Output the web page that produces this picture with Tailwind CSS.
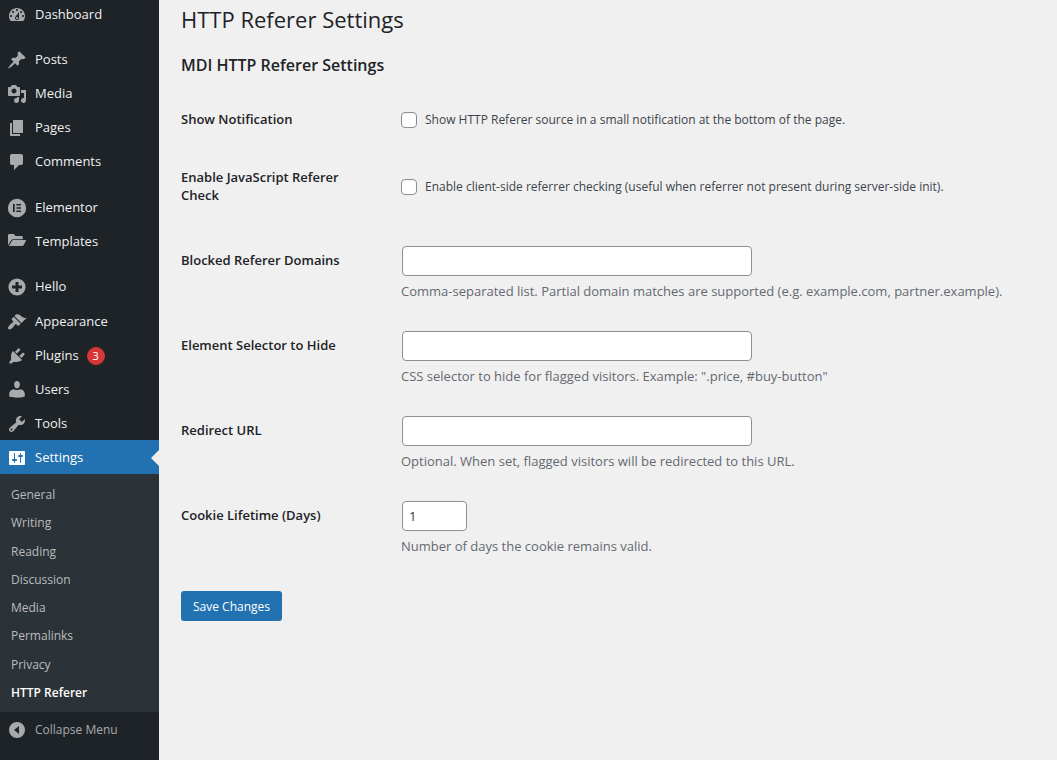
<!DOCTYPE html>
<html lang="en">
<head>
<meta charset="utf-8">
<meta name="viewport" content="width=device-width, initial-scale=1">
<title>HTTP Referer Settings</title>
<script src="https://cdn.jsdelivr.net/npm/@tailwindcss/browser@4"></script>
</head>
<body class="flex min-h-screen bg-[#f0f0f0] font-['Open_Sans','Noto_Sans',sans-serif] text-[13px] text-[#1d2327]">

<nav aria-label="Main menu" class="w-[159px] shrink-0 bg-[#1d2327] text-[#f0f0f1]">
  <ul>
    <li><a href="#" class="flex h-[30px] items-center gap-2 pl-[7px]">
      <svg class="size-5 fill-[#a7aaad]" viewBox="0 0 20 20"><path d="M3.76 16h12.48c1.1-1.37 1.76-3.11 1.76-5 0-4.42-3.58-8-8-8s-8 3.58-8 8c0 1.89.66 3.63 1.76 5zM10 4c.55 0 1 .45 1 1s-.45 1-1 1-1-.45-1-1 .45-1 1-1zM6 6c.55 0 1 .45 1 1s-.45 1-1 1-1-.45-1-1 .45-1 1-1zm8 0c.55 0 1 .45 1 1s-.45 1-1 1-1-.45-1-1 .45-1 1-1zm-5.37 5.55L12 7v6c0 1.1-.9 2-2 2s-2-.9-2-2c0-.57.24-1.08.63-1.45zM4 10c.55 0 1 .45 1 1s-.45 1-1 1-1-.45-1-1 .45-1 1-1zm12 0c.55 0 1 .45 1 1s-.45 1-1 1-1-.45-1-1 .45-1 1-1zm-5 3c0-.55-.45-1-1-1s-1 .45-1 1 .45 1 1 1 1-.45 1-1z"/></svg>Dashboard</a></li>
  </ul>
  <ul class="mt-3">
    <li><a href="#" class="flex h-[34px] items-center gap-2 pt-0.5 pl-[7px]">
      <svg class="size-5 fill-[#a7aaad]" viewBox="0 0 20 20"><path d="M10.44 3.02l1.82-1.82 6.36 6.35-1.83 1.82c-1.05-.68-2.48-.57-3.41.36l-.75.75c-.92.93-1.04 2.35-.35 3.41l-1.83 1.82-2.41-2.41-2.8 2.79c-.42.42-3.38 2.71-3.8 2.29s1.86-3.39 2.28-3.81l2.79-2.79L4.1 9.36l1.83-1.82c1.05.69 2.48.57 3.4-.36l.75-.75c.93-.92 1.05-2.35.36-3.41z"/></svg>Posts</a></li>
    <li><a href="#" class="flex h-[34px] items-center gap-2 pt-0.5 pl-[7px]">
      <svg class="size-5 fill-[#a7aaad]" viewBox="0 0 20 20"><path d="M13 11V4c0-.55-.45-1-1-1h-1.67L9 1H5L3.67 3H2c-.55 0-1 .45-1 1v7c0 .55.45 1 1 1h10c.55 0 1-.45 1-1zM7 4.5c1.38 0 2.5 1.12 2.5 2.5S8.38 9.5 7 9.5 4.5 8.38 4.5 7 5.62 4.5 7 4.5zM14 6h5v10.5c0 1.38-1.12 2.5-2.5 2.5S14 17.88 14 16.5s1.12-2.5 2.5-2.5c.17 0 .34.02.5.05V9h-3V6zm-4 8.05V13h2v3.5c0 1.38-1.12 2.5-2.5 2.5S7 17.88 7 16.5 8.12 14 9.5 14c.17 0 .34.02.5.05z"/></svg>Media</a></li>
    <li><a href="#" class="flex h-[34px] items-center gap-2 pt-0.5 pl-[7px]">
      <svg class="size-5 fill-[#a7aaad]" viewBox="0 0 20 20"><path d="M6 15V2h10v13H6zm-1 1h8v2H3V5h2v11z"/></svg>Pages</a></li>
    <li><a href="#" class="flex h-[34px] items-center gap-2 pt-0.5 pl-[7px]">
      <svg class="size-5 fill-[#a7aaad]" viewBox="0 0 20 20"><path d="M5 2h9c1.1 0 2 .9 2 2v7c0 1.1-.9 2-2 2h-2l-5 5v-5H5c-1.1 0-2-.9-2-2V4c0-1.1.9-2 2-2z"/></svg>Comments</a></li>
  </ul>
  <ul class="mt-3">
    <li><a href="#" class="flex h-[34px] items-center gap-2 pt-0.5 pl-[7px]">
      <svg class="size-5 fill-[#a7aaad]" viewBox="0 0 20 20"><path fill-rule="evenodd" d="M10 .8a9.200 9.200 0 1 0 0 18.400A9.200 9.200 0 0 0 10 .8zM6 6h1.700v8H6V6zm3.400 0H14v1.600H9.400V6zm0 3.200H14v1.600H9.400V9.200zm0 3.200H14V14H9.400v-1.600z"/></svg>Elementor</a></li>
    <li><a href="#" class="flex h-[34px] items-center gap-2 pt-0.5 pl-[7px]">
      <svg class="size-5 fill-[#a7aaad]" viewBox="0 0 20 20"><path d="M1 3.500C1 2.700 1.600 2 2.400 2h4.200L8.600 4h5.800c.8 0 1.400.6 1.400 1.400v1.800H6.400c-1 0-1.800.5-2.300 1.300L1 13.200V3.500zM6.400 8h11.800c.6 0 1 .6.700 1.100l-2.400 4.200c-.2.400-.6.700-1.100.7H1.900l3.300-5.400c.3-.4.700-.6 1.200-.6z"/></svg>Templates</a></li>
  </ul>
  <ul class="mt-3">
    <li><a href="#" class="flex h-[34px] items-center gap-2 pl-[7px]">
      <svg class="size-5 fill-[#a7aaad]" viewBox="0 0 20 20"><path fill-rule="evenodd" d="M10 1.400a8.600 8.600 0 1 0 0 17.200 8.600 8.600 0 0 0 0-17.200zM8.500 5h3v3.500H15v3h-3.500V15h-3v-3.500H5v-3h3.500V5z"/></svg>Hello</a></li>
    <li><a href="#" class="flex h-[34px] items-center gap-2 pt-0.5 pl-[7px]">
      <svg class="size-5 fill-[#a7aaad]" viewBox="0 0 20 20"><path d="M14.48 11.06L7.41 3.99l1.5-1.5c.5-.56 2.3-.47 3.51.32 1.21.8 1.43 1.28 2.91 2.1 1.18.64 2.45 1.26 4.45.85zm-.71.71L6.7 4.7 4.93 6.47c-.39.39-.39 1.02 0 1.41l1.06 1.06c.39.39.39 1.03 0 1.42-.6.6-1.43 1.11-2.21 1.69-.35.26-.7.53-1.01.84C1.43 14.23.4 16.08 1.4 17.07c.99 1 2.84-.03 4.18-1.36.31-.31.58-.66.85-1.02.57-.78 1.08-1.61 1.69-2.21.39-.39 1.02-.39 1.41 0l1.06 1.06c.39.39 1.02.39 1.41 0z"/></svg>Appearance</a></li>
    <li><a href="#" class="flex h-[34px] items-center gap-2 pt-0.5 pl-[7px]">
      <svg class="size-5 fill-[#a7aaad]" viewBox="0 0 20 20"><path d="M13.11 4.36L9.87 7.6 8 5.73l3.24-3.24c.35-.34 1.05-.2 1.56.32.52.51.66 1.21.31 1.55zm-8 1.77l.91-1.12 9.01 9.01-1.19.84c-.71.71-2.63 1.16-3.82 1.16H6.14L4.9 17.26c-.59.59-1.54.59-2.12 0-.59-.58-.59-1.53 0-2.12l1.24-1.24v-3.88c0-1.13.4-3.19 1.09-3.89zm7.26 3.97l3.24-3.24c.34-.35 1.04-.21 1.55.31.52.51.66 1.21.31 1.55l-3.24 3.25z"/></svg>Plugins<span class="flex size-[18px] items-center justify-center rounded-full bg-[#d63638] text-[11px] text-white">3</span></a></li>
    <li><a href="#" class="flex h-[34px] items-center gap-2 pt-0.5 pl-[7px]">
      <svg class="size-5 fill-[#a7aaad]" viewBox="0 0 20 20"><path d="M10 8.400c-2.100 0-2.900-2-2.900-3.800C7.100 2.400 8.200 1 10 1s2.900 1.400 2.900 3.600c0 1.800-.8 3.800-2.900 3.800zM6.600 9.300c.9.500 2.100.8 3.400.8s2.500-.3 3.400-.8c2.500.3 4.400 2.300 4.400 4.700v2.600c-2 .8-4.900 1.200-7.800 1.200s-5.800-.4-7.800-1.200V14c0-2.400 1.900-4.400 4.400-4.700z"/></svg>Users</a></li>
    <li><a href="#" class="flex h-[34px] items-center gap-2 pt-0.5 pl-[7px]">
      <svg class="size-5 fill-[#a7aaad]" viewBox="0 0 20 20"><path d="M16.68 9.77c-1.34 1.34-3.3 1.67-4.95.99l-5.41 6.52c-.99.99-2.59.99-3.58 0s-.99-2.59 0-3.57l6.52-5.42c-.68-1.65-.35-3.61.99-4.95 1.28-1.28 3.12-1.62 4.72-1.06l-2.89 2.89 2.82 2.82 2.86-2.87c.53 1.58.18 3.39-1.08 4.65zM3.81 16.21c.4.39 1.04.39 1.43 0 .4-.4.4-1.04 0-1.43-.39-.4-1.03-.4-1.43 0-.39.39-.39 1.03 0 1.43z"/></svg>Tools</a></li>
    <li>
      <a href="#" aria-current="true" class="flex h-[34px] items-center gap-2 bg-[#2271b1] pt-0.5 pl-[7px] text-white">
        <svg class="size-5 fill-white" viewBox="0 0 20 20"><path d="M18 16V4c0-.55-.45-1-1-1H3c-.55 0-1 .45-1 1v12c0 .55.45 1 1 1h14c.55 0 1-.45 1-1zM8 11h1c.55 0 1 .45 1 1s-.45 1-1 1H8v1.500c0 .28-.22.5-.5.5s-.5-.22-.5-.5V13H6c-.55 0-1-.45-1-1s.45-1 1-1h1V5.500c0-.28.22-.5.5-.5s.5.22.5.5V11zm5-2h-1c-.55 0-1-.45-1-1s.45-1 1-1h1V5.500c0-.28.22-.5.5-.5s.5.22.5.5V7h1c.55 0 1 .45 1 1s-.45 1-1 1h-1v5.500c0 .28-.22.5-.5.5s-.5-.22-.5-.5V9z"/></svg>Settings
        <svg class="ml-auto h-4 w-2 fill-[#f0f0f0]" viewBox="0 0 8 16"><path d="M8 0v16L0 8z"/></svg>
      </a>
      <ul class="flex min-h-[238px] flex-col bg-[#2c3338] pt-[7px] pb-[5px] text-xs text-[#babcbe]">
        <li class="flex flex-1 items-center"><a href="#" class="pl-[11px]">General</a></li>
        <li class="flex flex-1 items-center"><a href="#" class="pl-[11px]">Writing</a></li>
        <li class="flex flex-1 items-center"><a href="#" class="pl-[11px]">Reading</a></li>
        <li class="flex flex-1 items-center"><a href="#" class="pl-[11px]">Discussion</a></li>
        <li class="flex flex-1 items-center"><a href="#" class="pl-[11px]">Media</a></li>
        <li class="flex flex-1 items-center"><a href="#" class="pl-[11px]">Permalinks</a></li>
        <li class="flex flex-1 items-center"><a href="#" class="pl-[11px]">Privacy</a></li>
        <li class="flex flex-1 items-center"><a href="#" aria-current="page" class="pl-[11px] font-semibold text-white">HTTP Referer</a></li>
      </ul>
    </li>
  </ul>
  <button type="button" class="flex h-[34px] w-full items-center gap-2 pt-0.5 pl-[7px] text-xs text-[#a7aaad]">
    <svg class="size-5 fill-[#a7aaad]" viewBox="0 0 20 20"><path fill-rule="evenodd" d="M10 2a8 8 0 1 0 0 16 8 8 0 0 0 0-16zm2 4v8l-5-4 5-4z"/></svg>Collapse Menu</button>
</nav>

<main class="min-w-0 flex-1 px-[22px]">
  <h1 class="text-[22px] leading-[38px]">HTTP Referer Settings</h1>
  <h2 class="mt-[15px] text-base leading-6 font-semibold">MDI HTTP Referer Settings</h2>
  <form class="mt-[13px]">
    <div class="flex items-center py-5">
      <label for="notify" class="w-[220px] shrink-0 pr-10 leading-[18px] font-semibold">Show Notification</label>
      <div class="flex items-center gap-2 pt-0.5">
        <input id="notify" type="checkbox" aria-describedby="notify-text" class="size-4 shrink-0 appearance-none rounded border border-[#8c8f94] bg-white inset-shadow-xs">
        <label for="notify" id="notify-text" class="text-xs text-[#3c434a]">Show HTTP Referer source in a small notification at the bottom of the page.</label>
      </div>
    </div>
    <div class="flex items-center pt-5 pb-[27px]">
      <label for="jscheck" class="w-[220px] shrink-0 pr-10 leading-[18px] font-semibold">Enable JavaScript Referer Check</label>
      <div class="flex items-center gap-2 pt-0.5">
        <input id="jscheck" type="checkbox" aria-describedby="jscheck-text" class="size-4 shrink-0 appearance-none rounded border border-[#8c8f94] bg-white inset-shadow-xs">
        <label for="jscheck" id="jscheck-text" class="text-xs text-[#3c434a]">Enable client-side referrer checking (useful when referrer not present during server-side init).</label>
      </div>
    </div>
    <div class="flex pt-[15px] pb-4">
      <label for="domains" class="w-[220px] shrink-0 pt-[5px] leading-[18px] font-semibold">Blocked Referer Domains</label>
      <div>
        <input id="domains" type="text" class="ml-px block h-[30px] w-[350px] rounded border border-[#8c8f94] bg-white px-2">
        <p class="mt-1.5 leading-[18px] text-[#646970]">Comma-separated list. Partial domain matches are supported (e.g. example.com, partner.example).</p>
      </div>
    </div>
    <div class="flex pt-[15px] pb-4">
      <label for="selector" class="w-[220px] shrink-0 pt-[5px] leading-[18px] font-semibold">Element Selector to Hide</label>
      <div>
        <input id="selector" type="text" class="ml-px block h-[30px] w-[350px] rounded border border-[#8c8f94] bg-white px-2">
        <p class="mt-1.5 leading-[18px] text-[#646970]">CSS selector to hide for flagged visitors. Example: ".price, #buy-button"</p>
      </div>
    </div>
    <div class="flex pt-[15px] pb-4">
      <label for="redirect" class="w-[220px] shrink-0 pt-[5px] leading-[18px] font-semibold">Redirect URL</label>
      <div>
        <input id="redirect" type="text" class="ml-px block h-[30px] w-[350px] rounded border border-[#8c8f94] bg-white px-2">
        <p class="mt-1.5 leading-[18px] text-[#646970]">Optional. When set, flagged visitors will be redirected to this URL.</p>
      </div>
    </div>
    <div class="flex pt-[15px] pb-4">
      <label for="days" class="w-[220px] shrink-0 pt-[5px] leading-[18px] font-semibold">Cookie Lifetime (Days)</label>
      <div>
        <input id="days" type="number" value="1" class="ml-px block h-[30px] w-[65px] rounded border border-[#8c8f94] bg-white px-1.5 text-[#2c3338]">
        <p class="mt-1.5 leading-[18px] text-[#646970]">Number of days the cookie remains valid.</p>
      </div>
    </div>
    <button type="submit" class="mt-5 h-[30px] rounded-[3px] bg-[#2271b1] px-3 pt-0.5 text-xs text-white">Save Changes</button>
  </form>
</main>
</body>
</html>
